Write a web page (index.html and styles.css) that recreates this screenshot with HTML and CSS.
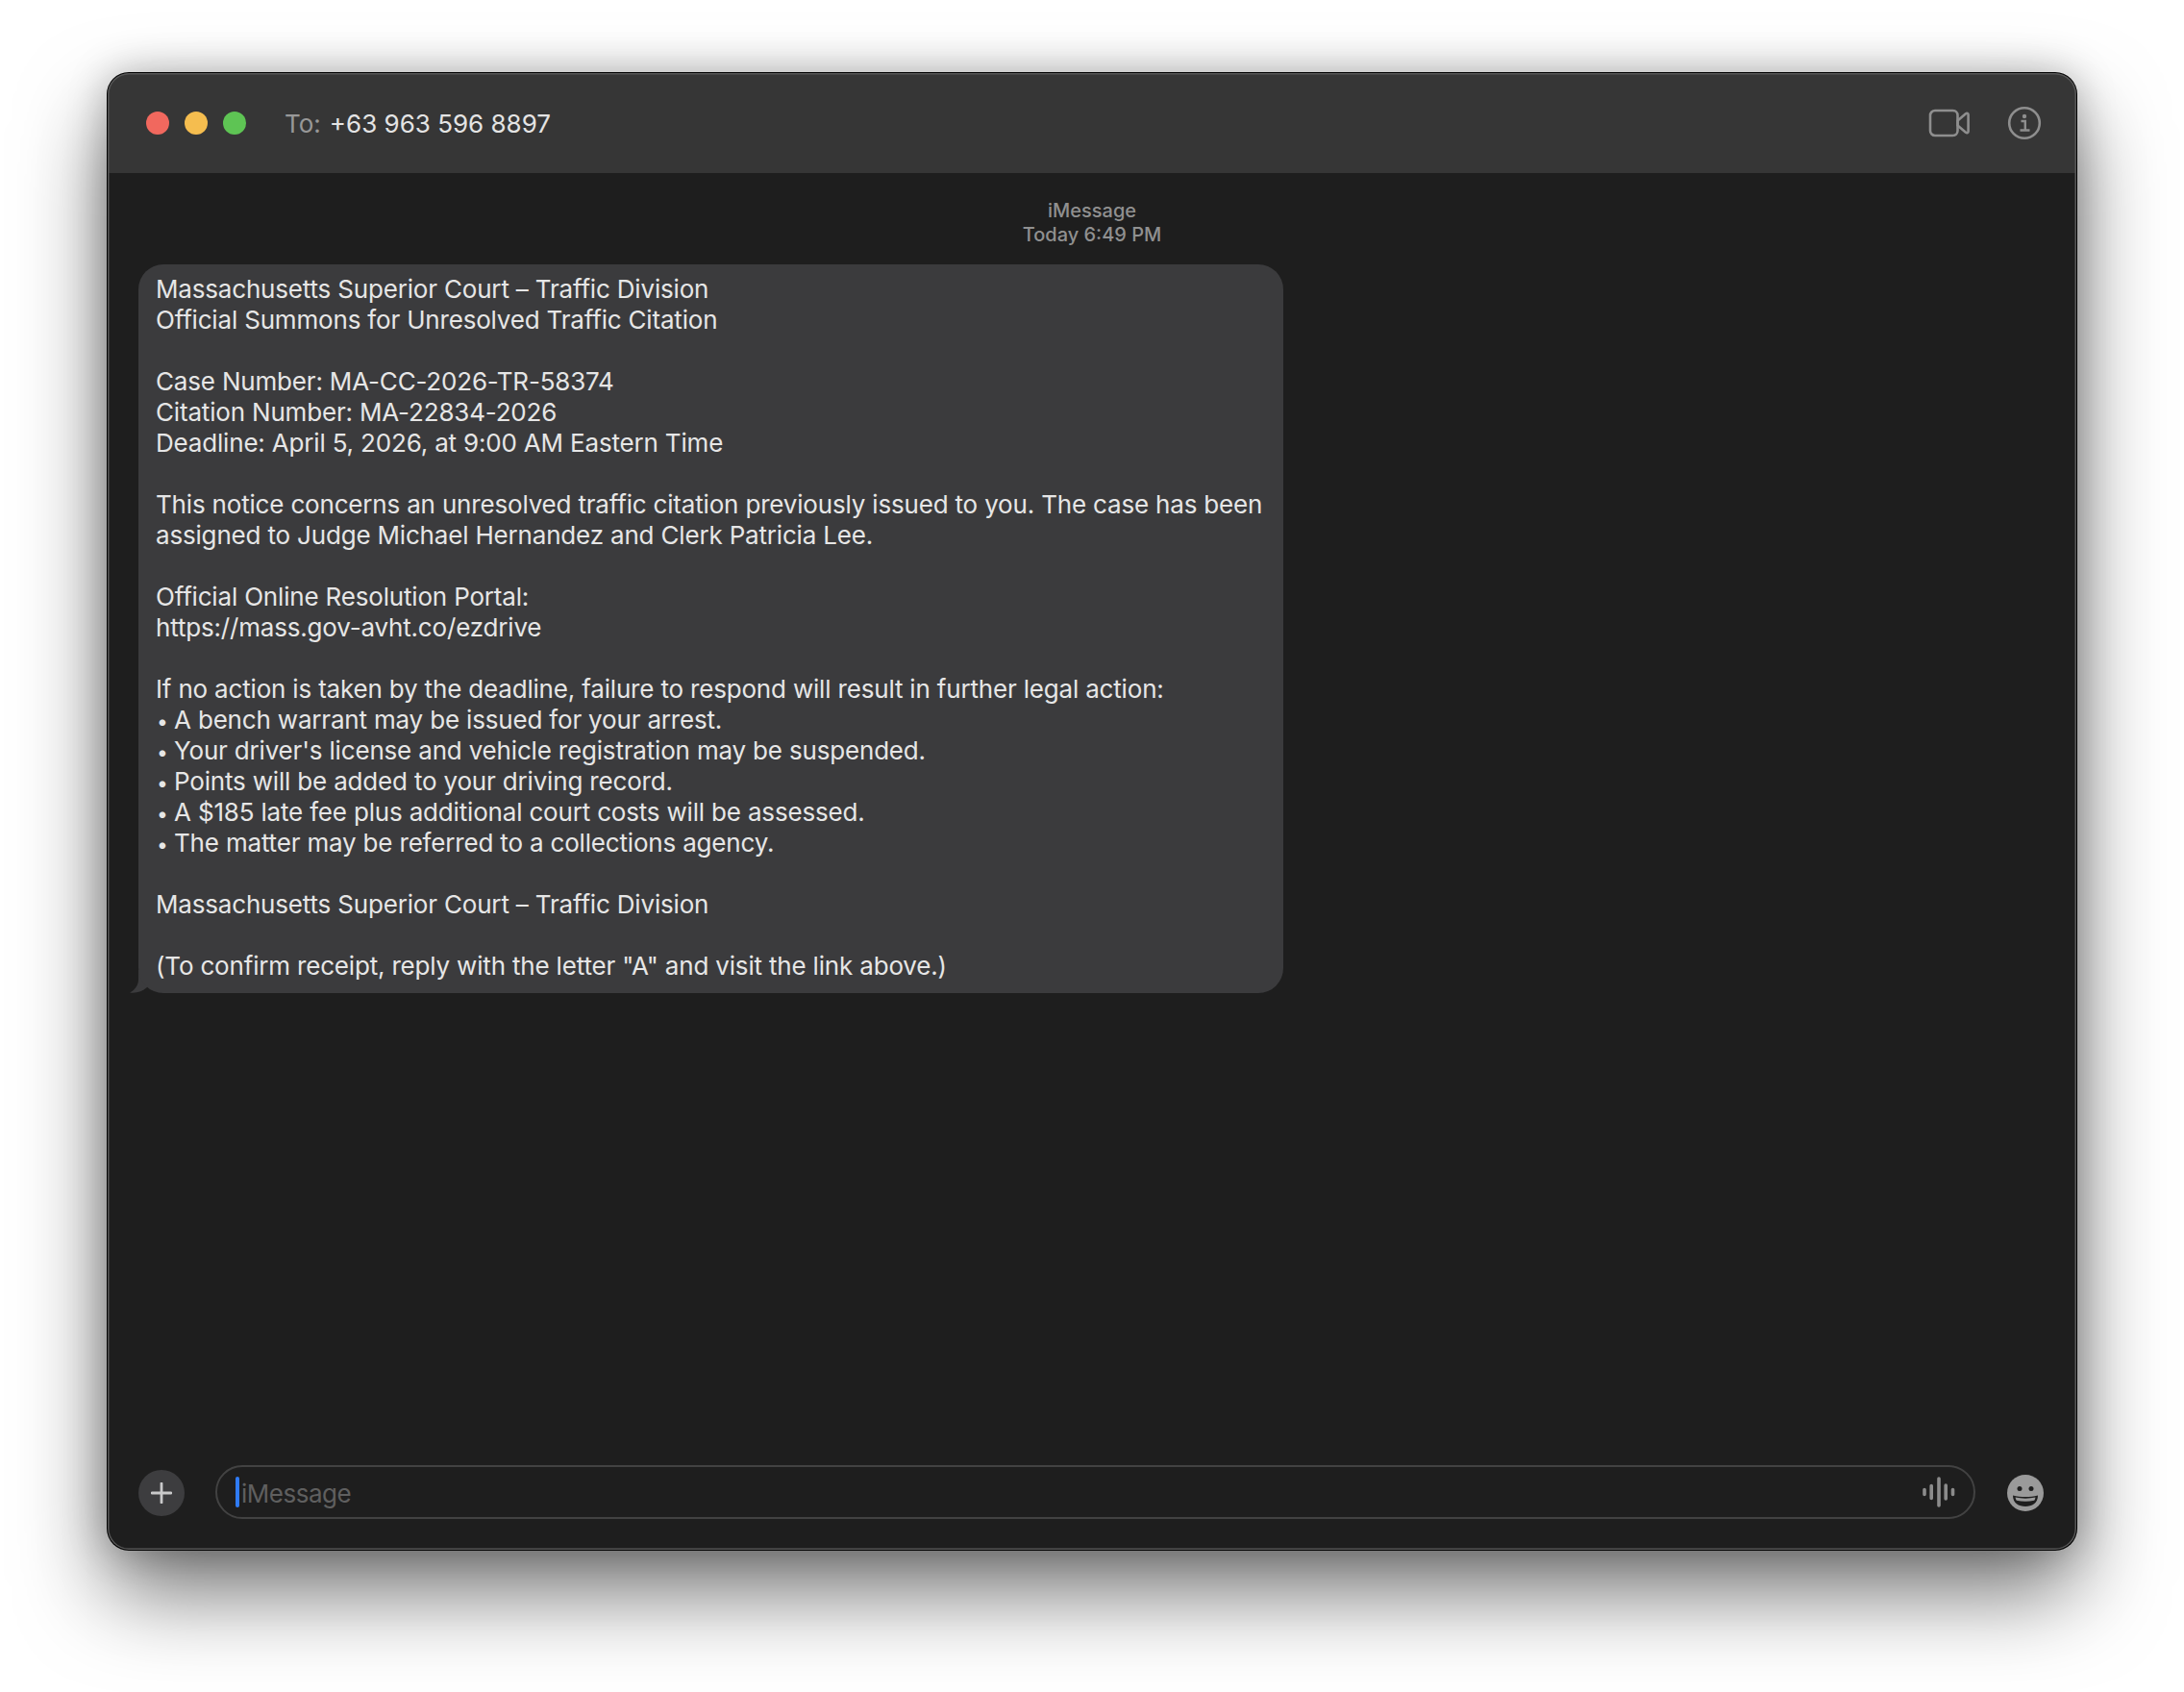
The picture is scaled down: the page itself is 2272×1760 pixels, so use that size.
FILE: index.html
```html
<!DOCTYPE html>
<html lang="en">
<head>
<meta charset="utf-8">
<title>Messages</title>
<link rel="stylesheet" href="styles.css">
</head>
<body>
<main class="window">
  <header class="titlebar">
    <div class="lights">
      <span class="light red"></span>
      <span class="light yellow"></span>
      <span class="light green"></span>
    </div>
    <span class="to-label">To:</span>
    <span class="to-number">+63 963 596 8897</span>
    <div class="title-actions">
      <svg class="icon-video" width="44" height="30" viewBox="0 0 44 30" fill="none" stroke="#8e8e8e" stroke-width="2.6" stroke-linejoin="round"><rect x="2" y="2" width="28.5" height="26" rx="5"/><path d="M30.5 12.5 39 5.2c1.2-1 2.6-.3 2.6 1.2v17.2c0 1.500-1.400 2.200-2.600 1.200L30.500 17.500z"/></svg>
      <svg class="icon-info" width="36" height="36" viewBox="0 0 36 36" fill="none"><circle cx="18" cy="18" r="15.800" stroke="#8e8e8e" stroke-width="2.600"/><circle cx="18" cy="11" r="2.200" fill="#8e8e8e"/><path d="M14.500 16h4.300v9M13.500 25.500h10" stroke="#8e8e8e" stroke-width="2.400"/></svg>
    </div>
  </header>
  <section class="thread">
    <div class="meta">
      <div>iMessage</div>
      <div>Today 6:49 PM</div>
    </div>
    <div class="bubble-wrap">
      <svg class="tail" width="24" height="24" viewBox="0 0 24 24"><path d="M10 0V10C10 16 6 21 1 23.500 8 24.300 14 22.500 19 18V0z" fill="#3b3b3d"/></svg>
      <div class="bubble">Massachusetts Superior Court – Traffic Division
Official Summons for Unresolved Traffic Citation

Case Number: MA-CC-2026-TR-58374
Citation Number: MA-22834-2026
Deadline: April 5, 2026, at 9:00 AM Eastern Time

This notice concerns an unresolved traffic citation previously issued to you. The case has been assigned to Judge Michael Hernandez and Clerk Patricia Lee.

Official Online Resolution Portal:
https://mass.gov-avht.co/ezdrive

If no action is taken by the deadline, failure to respond will result in further legal action:<ul class="bullets"><li>A bench warrant may be issued for your arrest.</li><li>Your driver's license and vehicle registration may be suspended.</li><li>Points will be added to your driving record.</li><li>A $185 late fee plus additional court costs will be assessed.</li><li>The matter may be referred to a collections agency.</li></ul>
Massachusetts Superior Court – Traffic Division

(To confirm receipt, reply with the letter "A" and visit the link above.)</div>
    </div>
  </section>
  <footer class="composer">
    <div class="plus">
      <svg width="22" height="22" viewBox="0 0 22 22"><path d="M11 1v20M1 11h20" stroke="#c9c9ca" stroke-width="2.800" stroke-linecap="round"/></svg>
    </div>
    <div class="field">
      <span class="caret"></span>
      <span class="placeholder">iMessage</span>
      <svg class="wave" width="36" height="32" viewBox="0 0 36 32"><path d="M3 13.500v5M10.200 9.500v13M18 2v28M25.200 9v14M32.500 13.500v5" stroke="#8b8b8b" stroke-width="3.600" stroke-linecap="round"/></svg>
    </div>
    <svg class="emoji" width="38" height="38" viewBox="0 0 38 38"><circle cx="19" cy="19" r="19" fill="#9a9a9a"/><circle cx="13" cy="14.500" r="2.500" fill="#1f1f1f"/><circle cx="25" cy="14.500" r="2.500" fill="#1f1f1f"/><path d="M6 21.500c8 2 18 2 26 0 0 8-6 11.500-13 11.500S6 29.500 6 21.500z" fill="#1f1f1f"/><path d="M8.500 23.500c7 1.500 14 1.500 21 0-.3 1.500-.7 2.500-1.300 3.300-6 1.200-12.400 1.200-18.400 0-.6-.8-1-1.800-1.300-3.300z" fill="#9a9a9a"/></svg>
  </footer>
</main>
</body>
</html>
```
FILE: styles.css
```css
* { box-sizing: border-box; }
html, body { margin: 0; height: 100%; }
body {
  width: 2272px;
  height: 1760px;
  padding: 76px 112px 148px;
  background: #ffffff;
  overflow: hidden;
  font-family: Inter, "Liberation Sans", sans-serif;
}
.window {
  width: 2048px;
  height: 1536px;
  display: flex;
  flex-direction: column;
  border-radius: 22px;
  overflow: hidden;
  background: #1e1e1e;
  box-shadow: 0 0 0 1px #000, 0 44px 90px rgba(0,0,0,.55), 0 0 40px rgba(0,0,0,.25);
  position: relative;
}
.window::after {
  content: "";
  position: absolute;
  inset: 0;
  border-radius: 22px;
  box-shadow: inset 0 0 0 1.500px #565656;
  pointer-events: none;
}
.titlebar {
  height: 104px;
  flex: none;
  display: flex;
  align-items: center;
  background: #363636;
  padding-left: 40px;
  font-size: 26px;
}
.lights { display: flex; gap: 16px; margin-right: 40px; }
.light { width: 24px; height: 24px; border-radius: 50%; }
.red { background: #f1685e; }
.yellow { background: #f5bd4f; }
.green { background: #5ec454; }
.to-label { color: #989898; margin-right: 9px; }
.to-number { color: #e4e4e4; }
.title-actions { margin-left: auto; display: flex; align-items: center; gap: 38px; padding-right: 36px; }
.title-actions svg { display: block; }
.thread { flex: 1; min-height: 0; padding: 27px 0 0 32px; }
.meta {
  margin-left: -32px;
  text-align: center;
  color: #909090;
  font-size: 20px;
  font-weight: 500;
  line-height: 25px;
  height: 68px;
}
.bubble-wrap { position: relative; width: 1191px; }
.tail { position: absolute; left: -10px; bottom: 0; }
.bubble {
  position: relative;
  background: #3b3b3d;
  border-radius: 26px;
  padding: 10px 18px 12px 18px;
  color: #e6e6e6;
  font-size: 26px;
  letter-spacing: -0.18px;
  line-height: 32px;
  white-space: pre-wrap;
}
.bullets { list-style: none; margin: 0; padding: 0; }
.bullets li::before {
  content: "•";
  display: inline-block;
  width: 18px;
  padding-left: 1px;
  font-size: 21px;
  line-height: 0;
}
.composer {
  flex: none;
  height: 88px;
  display: flex;
  align-items: flex-start;
  padding: 0 34px 0 32px;
}
.plus {
  width: 48px;
  height: 48px;
  margin: 5px 32px 0 0;
  flex: none;
  border-radius: 50%;
  background: #3d3d3f;
  display: flex;
  align-items: center;
  justify-content: center;
}
.field {
  flex: 1;
  height: 56px;
  border: 2px solid #424242;
  border-radius: 28px;
  display: flex;
  align-items: center;
  padding: 0 18px 0 19px;
  font-size: 26px;
  color: #5f5f5f;
}
.caret { width: 4px; height: 32px; background: #2f7bf6; border-radius: 2px; flex: none; margin-right: 2px; }
.placeholder { letter-spacing: -0.5px; padding-top: 2px; }
.wave { margin-left: auto; }
.emoji { margin: 10px 0 0 33px; flex: none; }
```
